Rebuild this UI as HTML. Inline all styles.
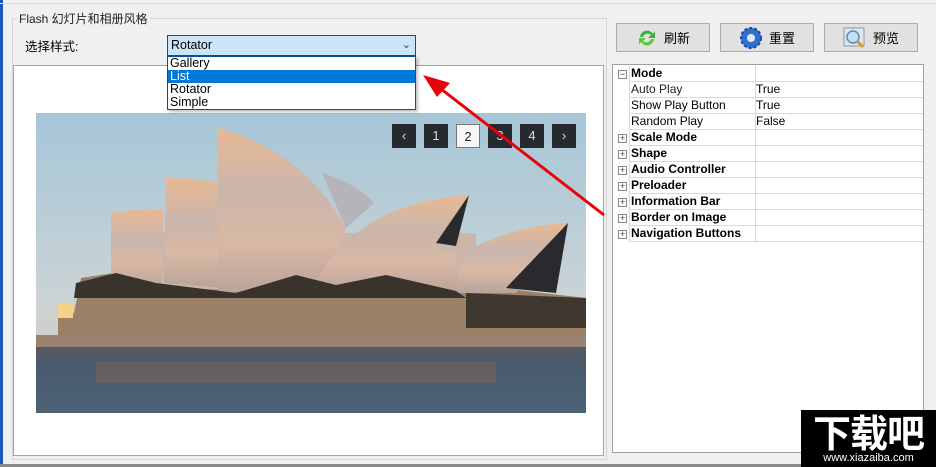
<!DOCTYPE html>
<html><head><meta charset="utf-8"><style>
*{margin:0;padding:0;box-sizing:border-box}
body{width:936px;height:467px;background:#f0f0f0;position:relative;overflow:hidden;font-family:"Liberation Sans","Noto Sans CJK SC",sans-serif;font-size:12px;color:#000}
.a{position:absolute}
.btn{position:absolute;top:23px;width:94px;height:29px;background:#e1e1e1;border:1px solid #adadad;font-size:13px;display:flex;align-items:center;justify-content:center;gap:6px}
.pg{position:absolute;left:612px;top:64px;width:312px;height:389px;background:#fff;border:1px solid #a0a0a0}
.row{position:absolute;left:17px;width:293px;height:16px;border-bottom:1px solid #d8d8d8;font-size:12px;line-height:15px}
.row .n{position:absolute;left:1px;top:0}
.row .v{position:absolute;left:125px;top:0;width:1px;height:16px;background:#d8d8d8}
.row .t{position:absolute;left:126px;top:0}
.b{font-weight:bold}
.pm{position:absolute;left:5px;width:9px;height:9px;border:1px solid #888;background:#fff;font-size:9px;line-height:7px;text-align:center;color:#333}
.nb{position:absolute;top:124px;width:24px;height:24px;background:#252a2e;color:#ddd;font-size:13px;text-align:center;line-height:24px}
</style></head><body>
<div class="a" style="left:0;top:0;width:3px;height:467px;background:#1e5ab4"></div>
<div class="a" style="left:0;top:0;width:936px;height:4px;border-bottom:1px solid #ddd"></div>
<div class="a" style="left:12px;top:18px;width:595px;height:442px;border:1px solid #d5d5d5"></div>
<div class="a" style="left:17px;top:10px;background:#f0f0f0;padding:0 2px;font-size:12px"><span style="color:#222">Flash 幻灯片和相册风格</span></div>
<div class="a" style="left:25px;top:36px;font-size:12.5px">选择样式:</div>
<div class="a" style="left:167px;top:35px;width:249px;height:21px;background:#cce4f7;border:1px solid #005499;font-size:12.5px;line-height:19px;padding-left:3px">Rotator<span style="position:absolute;right:4px;top:0;color:#444;font-size:11px">&#8964;</span></div>
<div class="a" style="left:13px;top:65px;width:591px;height:391px;background:#fff;border:1px solid #a5a5a5"></div>
<div class="a" style="left:36px;top:113px;width:550px;height:300px;overflow:hidden">
<svg width="550" height="300" viewBox="0 0 550 300">
<defs><linearGradient id="sky" x1="0" y1="0" x2="0" y2="1"><stop offset="0" stop-color="#a6c6d8"/><stop offset=".6" stop-color="#c9d3d6"/><stop offset="1" stop-color="#dcc9b5"/></linearGradient>
<linearGradient id="sh" x1="0" y1="0" x2="0" y2="1"><stop offset="0" stop-color="#e8b894"/><stop offset=".4" stop-color="#c9b6ac"/><stop offset=".7" stop-color="#d9b8a4"/><stop offset="1" stop-color="#b8a49a"/></linearGradient>
<linearGradient id="wa" x1="0" y1="0" x2="0" y2="1"><stop offset="0" stop-color="#5a5a60"/><stop offset=".3" stop-color="#4a5a6e"/><stop offset="1" stop-color="#4d6476"/></linearGradient></defs>
<rect width="550" height="300" fill="url(#sky)"/>
<rect y="232" width="550" height="68" fill="url(#wa)"/>
<rect x="60" y="248" width="400" height="22" fill="#8a6452" opacity=".45"/>
<rect y="222" width="550" height="12" fill="#9a8370"/>
<path d="M38 200 L45 165 L90 158 L200 170 L300 165 L420 170 L550 185 L550 222 L22 222 L22 200Z" fill="#9c8065"/>
<path d="M430 180 L550 185 L550 215 L430 215Z" fill="#3e3730"/>
<path d="M75 120 L440 120 L440 180 L75 175Z" fill="#cbb6aa"/>
<path d="M75 165 L75 100 Q100 95 128 97 L125 175Z" fill="url(#sh)"/>
<path d="M128 170 L130 65 Q160 65 182 70 L185 175Z" fill="url(#sh)"/>
<path d="M182 180 L182 15 Q270 40 310 115 L290 175Z" fill="url(#sh)"/>
<path d="M286 60 Q320 70 338 90 L310 115Z" fill="#b6b4bb"/>
<path d="M280 170 Q320 90 433 82 L400 135 L420 140 L425 180Z" fill="url(#sh)"/>
<path d="M433 82 L400 130 L420 133Z" fill="#2a2a2e"/>
<path d="M420 180 L425 140 Q480 112 532 110 L480 180Z" fill="url(#sh)"/>
<path d="M532 110 L470 175 L520 180Z" fill="#2a2a2e"/>
<path d="M40 170 L80 160 L120 170 L200 180 L260 162 L300 172 L350 162 L420 178 L430 185 L38 185Z" fill="#3a322c"/>
<rect x="22" y="190" width="15" height="15" fill="#f4d28a"/>
</svg></div>
<div class="nb" style="left:392px">&#8249;</div>
<div class="nb" style="left:424px">1</div>
<div class="nb" style="left:456px;background:#f4f6f8;color:#222;border:1px solid #777">2</div>
<div class="nb" style="left:488px">3</div>
<div class="nb" style="left:520px">4</div>
<div class="nb" style="left:552px">&#8250;</div>
<div class="a" style="left:167px;top:56px;width:249px;height:54px;background:#fff;border:1px solid #005499;font-size:12.5px;line-height:13px;box-shadow:2px 2px 3px rgba(0,0,0,.25)">
<div style="padding-left:2px">Gallery</div><div style="padding-left:2px;background:#0078d7;color:#fff">List</div><div style="padding-left:2px">Rotator</div><div style="padding-left:2px">Simple</div></div>
<svg class="a" style="left:0;top:0" width="936" height="467"><line x1="432" y1="82" x2="604" y2="215" stroke="#e8000a" stroke-width="3"/><path d="M423 75 L450 83 L437 97Z" fill="#e8000a"/></svg>
<div class="btn" style="left:616px"><svg width="22" height="22" viewBox="0 0 22 22"><path d="M4 10 A7 7 0 0 1 17 7 L19 4 L19 11 L12 11 L15 8 A5 5 0 0 0 7 10Z" fill="#3cb43c"/><path d="M18 12 A7 7 0 0 1 5 15 L3 18 L3 11 L10 11 L7 14 A5 5 0 0 0 15 12Z" fill="#5ac83c"/></svg>刷新</div>
<div class="btn" style="left:720px"><svg width="24" height="24" viewBox="0 0 24 24"><circle cx="12" cy="12" r="10" fill="#2f6fd0" stroke="#1c4a9a" stroke-width="2" stroke-dasharray="3 2"/><circle cx="12" cy="12" r="4" fill="#dfe9f7"/></svg>重置</div>
<div class="btn" style="left:824px"><svg width="24" height="22" viewBox="0 0 24 22"><rect x="1" y="1" width="20" height="18" fill="#dfe8f2" stroke="#7c98b8"/><circle cx="10" cy="10" r="6" fill="#bfe0f7" stroke="#6688aa" stroke-width="1.5"/><line x1="14" y1="14" x2="20" y2="20" stroke="#d89a2a" stroke-width="3"/></svg>预览</div>
<div class="pg">
<div class="row" style="top:1px"><span class="n b">Mode</span><span class="v"></span></div>
<div class="pm" style="top:5px">−</div>
<div class="row" style="top:17px"><span class="n" style="color:#222">Auto Play</span><span class="v"></span><span class="t">True</span></div>
<div class="row" style="top:33px"><span class="n">Show Play Button</span><span class="v"></span><span class="t">True</span></div>
<div class="row" style="top:49px"><span class="n">Random Play</span><span class="v"></span><span class="t">False</span></div>
<div class="row" style="top:65px"><span class="n b">Scale Mode</span><span class="v"></span></div><div class="pm" style="top:69px">+</div>
<div class="row" style="top:81px"><span class="n b">Shape</span><span class="v"></span></div><div class="pm" style="top:85px">+</div>
<div class="row" style="top:97px"><span class="n b">Audio Controller</span><span class="v"></span></div><div class="pm" style="top:101px">+</div>
<div class="row" style="top:113px"><span class="n b">Preloader</span><span class="v"></span></div><div class="pm" style="top:117px">+</div>
<div class="row" style="top:129px"><span class="n b">Information Bar</span><span class="v"></span></div><div class="pm" style="top:133px">+</div>
<div class="row" style="top:145px"><span class="n b">Border on Image</span><span class="v"></span></div><div class="pm" style="top:149px">+</div>
<div class="row" style="top:161px"><span class="n b">Navigation Buttons</span><span class="v"></span></div><div class="pm" style="top:165px">+</div>
<div class="a" style="left:16px;top:1px;width:1px;height:176px;background:#d8d8d8"></div>
</div>
<div class="a" style="left:0;top:464px;width:936px;height:3px;background:#8a8a8a"></div>
<div class="a" style="left:801px;top:410px;width:135px;height:57px;background:#000;color:#fff;text-align:center">
<div style="font-size:38px;font-weight:bold;line-height:42px;letter-spacing:-1px;font-family:'Noto Sans CJK SC',sans-serif">下载吧</div>
<div style="font-size:11px;line-height:12px">www.xiazaiba.com</div></div>
</body></html>
